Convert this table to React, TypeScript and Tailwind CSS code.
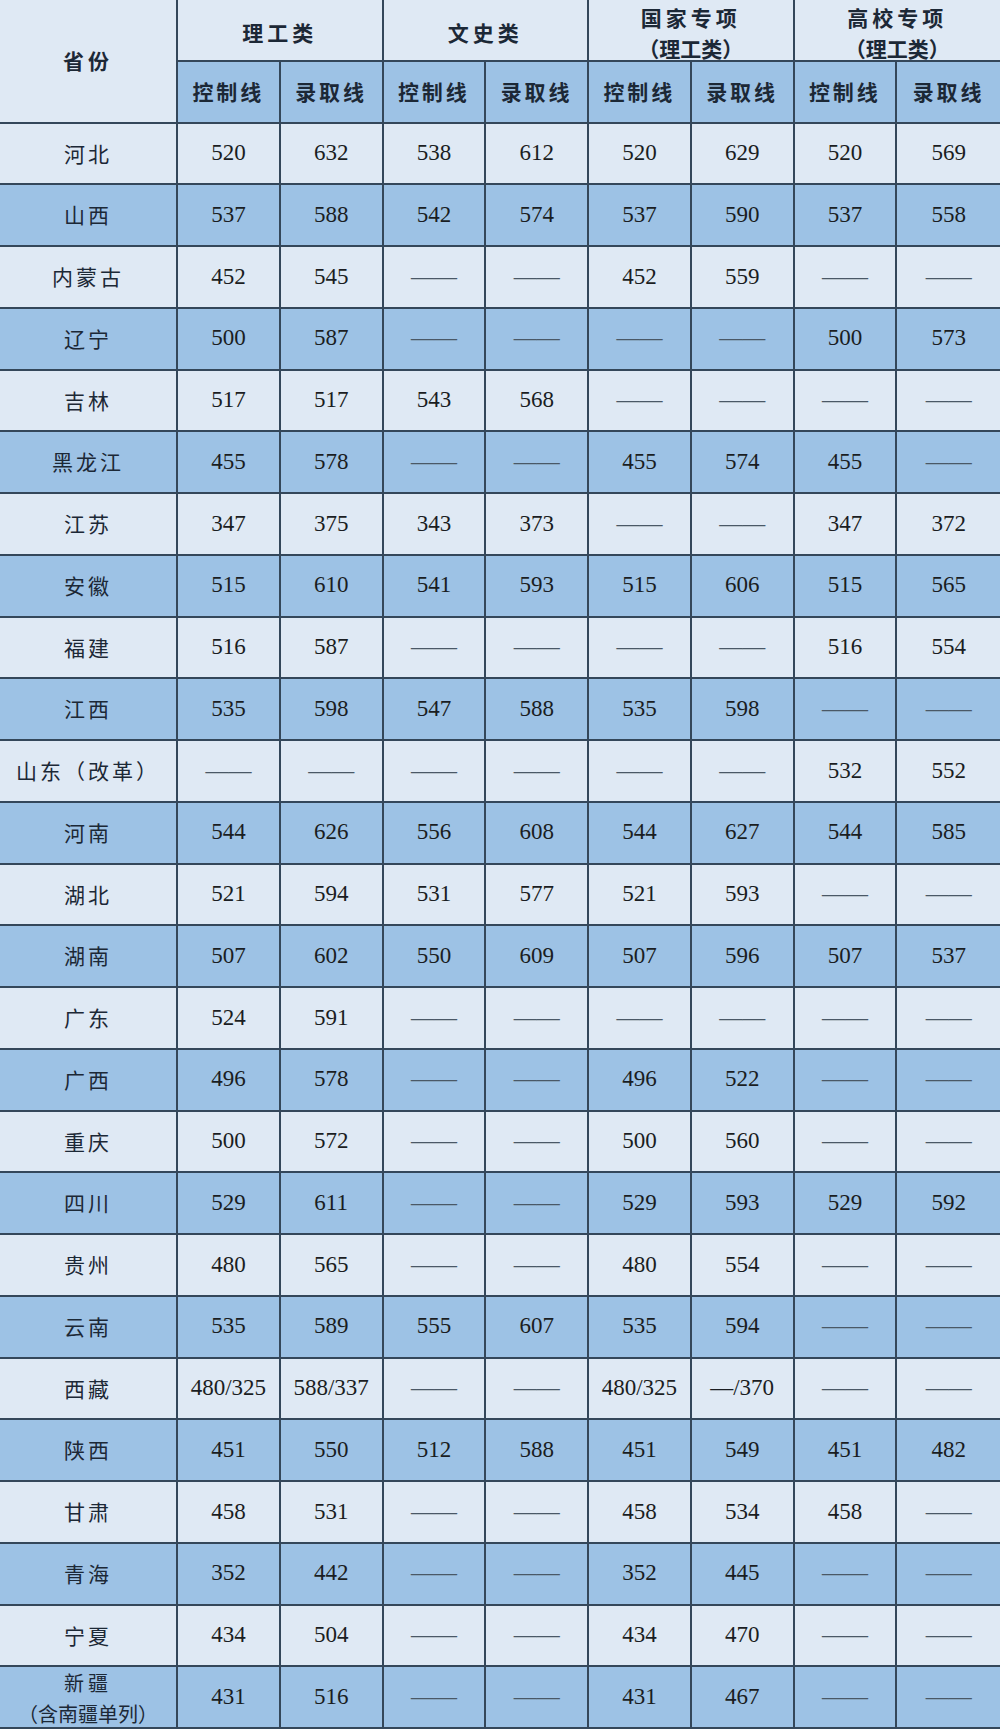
import React from "react";

const D = "——";
const rows: [string, string[]][] = [
  ["河北", ["520", "632", "538", "612", "520", "629", "520", "569"]],
  ["山西", ["537", "588", "542", "574", "537", "590", "537", "558"]],
  ["内蒙古", ["452", "545", D, D, "452", "559", D, D]],
  ["辽宁", ["500", "587", D, D, D, D, "500", "573"]],
  ["吉林", ["517", "517", "543", "568", D, D, D, D]],
  ["黑龙江", ["455", "578", D, D, "455", "574", "455", D]],
  ["江苏", ["347", "375", "343", "373", D, D, "347", "372"]],
  ["安徽", ["515", "610", "541", "593", "515", "606", "515", "565"]],
  ["福建", ["516", "587", D, D, D, D, "516", "554"]],
  ["江西", ["535", "598", "547", "588", "535", "598", D, D]],
  ["山东（改革）", [D, D, D, D, D, D, "532", "552"]],
  ["河南", ["544", "626", "556", "608", "544", "627", "544", "585"]],
  ["湖北", ["521", "594", "531", "577", "521", "593", D, D]],
  ["湖南", ["507", "602", "550", "609", "507", "596", "507", "537"]],
  ["广东", ["524", "591", D, D, D, D, D, D]],
  ["广西", ["496", "578", D, D, "496", "522", D, D]],
  ["重庆", ["500", "572", D, D, "500", "560", D, D]],
  ["四川", ["529", "611", D, D, "529", "593", "529", "592"]],
  ["贵州", ["480", "565", D, D, "480", "554", D, D]],
  ["云南", ["535", "589", "555", "607", "535", "594", D, D]],
  ["西藏", ["480/325", "588/337", D, D, "480/325", "—/370", D, D]],
  ["陕西", ["451", "550", "512", "588", "451", "549", "451", "482"]],
  ["甘肃", ["458", "531", D, D, "458", "534", "458", D]],
  ["青海", ["352", "442", D, D, "352", "445", D, D]],
  ["宁夏", ["434", "504", D, D, "434", "470", D, D]],
  ["新疆", ["431", "516", D, D, "431", "467", D, D]],
];

const cjk = "font-['Noto_Sans_CJK_SC',sans-serif]";
const serif = "font-['Liberation_Serif',serif]";
const LIGHT = "bg-[#dfe9f4]";
const DARK = "bg-[#9dc2e5]";
const cell = "flex items-center justify-center border-b-2 border-[#34475a] overflow-hidden";

export default function App() {
  return (
    <div className="w-[1000px] h-[1729px] bg-[#dfe9f4] overflow-hidden">
      <div className="grid h-full w-full grid-cols-[178px_repeat(8,minmax(0,1fr))] grid-rows-[repeat(28,minmax(0,1fr))] text-[#1c2836]">
        {/* header */}
        <div className={`${cell} ${LIGHT} row-span-2 border-r-2 ${cjk} text-[21px] font-bold tracking-[4px]`}>省份</div>
        <div className={`${cell} ${LIGHT} col-span-2 border-r-2 ${cjk} text-[21px] font-bold tracking-[4px] pt-[6px]`}>理工类</div>
        <div className={`${cell} ${LIGHT} col-span-2 border-r-2 ${cjk} text-[21px] font-bold tracking-[4px] pt-[6px]`}>文史类</div>
        <div className={`${cell} ${LIGHT} col-span-2 border-r-2 ${cjk} text-[21px] font-bold flex-col leading-[31px] pt-[6px]`}>
          <span className="tracking-[4px]">国家专项</span>
          <span>（理工类）</span>
        </div>
        <div className={`${cell} ${LIGHT} col-span-2 ${cjk} text-[21px] font-bold flex-col leading-[31px] pt-[6px]`}>
          <span className="tracking-[4px]">高校专项</span>
          <span>（理工类）</span>
        </div>
        {Array.from({ length: 8 }).map((_, i) => (
          <div
            key={i}
            className={`${cell} ${DARK} ${i < 7 ? "border-r-2" : ""} ${cjk} text-[21px] font-bold tracking-[3px]`}
          >
            {i % 2 === 0 ? "控制线" : "录取线"}
          </div>
        ))}
        {/* body */}
        {rows.map(([prov, vals], r) => {
          const bg = r % 2 === 0 ? LIGHT : DARK;
          const last = r === rows.length - 1;
          return (
            <React.Fragment key={prov}>
              {last ? (
                <div className={`flex flex-col items-center justify-start overflow-hidden ${bg} border-r-2 border-b-2 border-[#34475a] ${cjk} text-[20px] leading-[31px]`}>
                  <span className="tracking-[4px]">新疆</span>
                  <span className="whitespace-nowrap">（含南疆单列）</span>
                </div>
              ) : (
                <div className={`${cell} ${bg} border-r-2 ${cjk} text-[21px] tracking-[3px] whitespace-nowrap`}>{prov}</div>
              )}
              {vals.map((v, i) => (
                <div
                  key={i}
                  className={`${cell} ${bg} ${i < 7 ? "border-r-2" : ""} ${serif} text-[23px] ${v === D ? "text-[#4a5866]" : "text-[#1a1d22]"} whitespace-nowrap`}
                >
                  {v}
                </div>
              ))}
            </React.Fragment>
          );
        })}
      </div>
    </div>
  );
}
